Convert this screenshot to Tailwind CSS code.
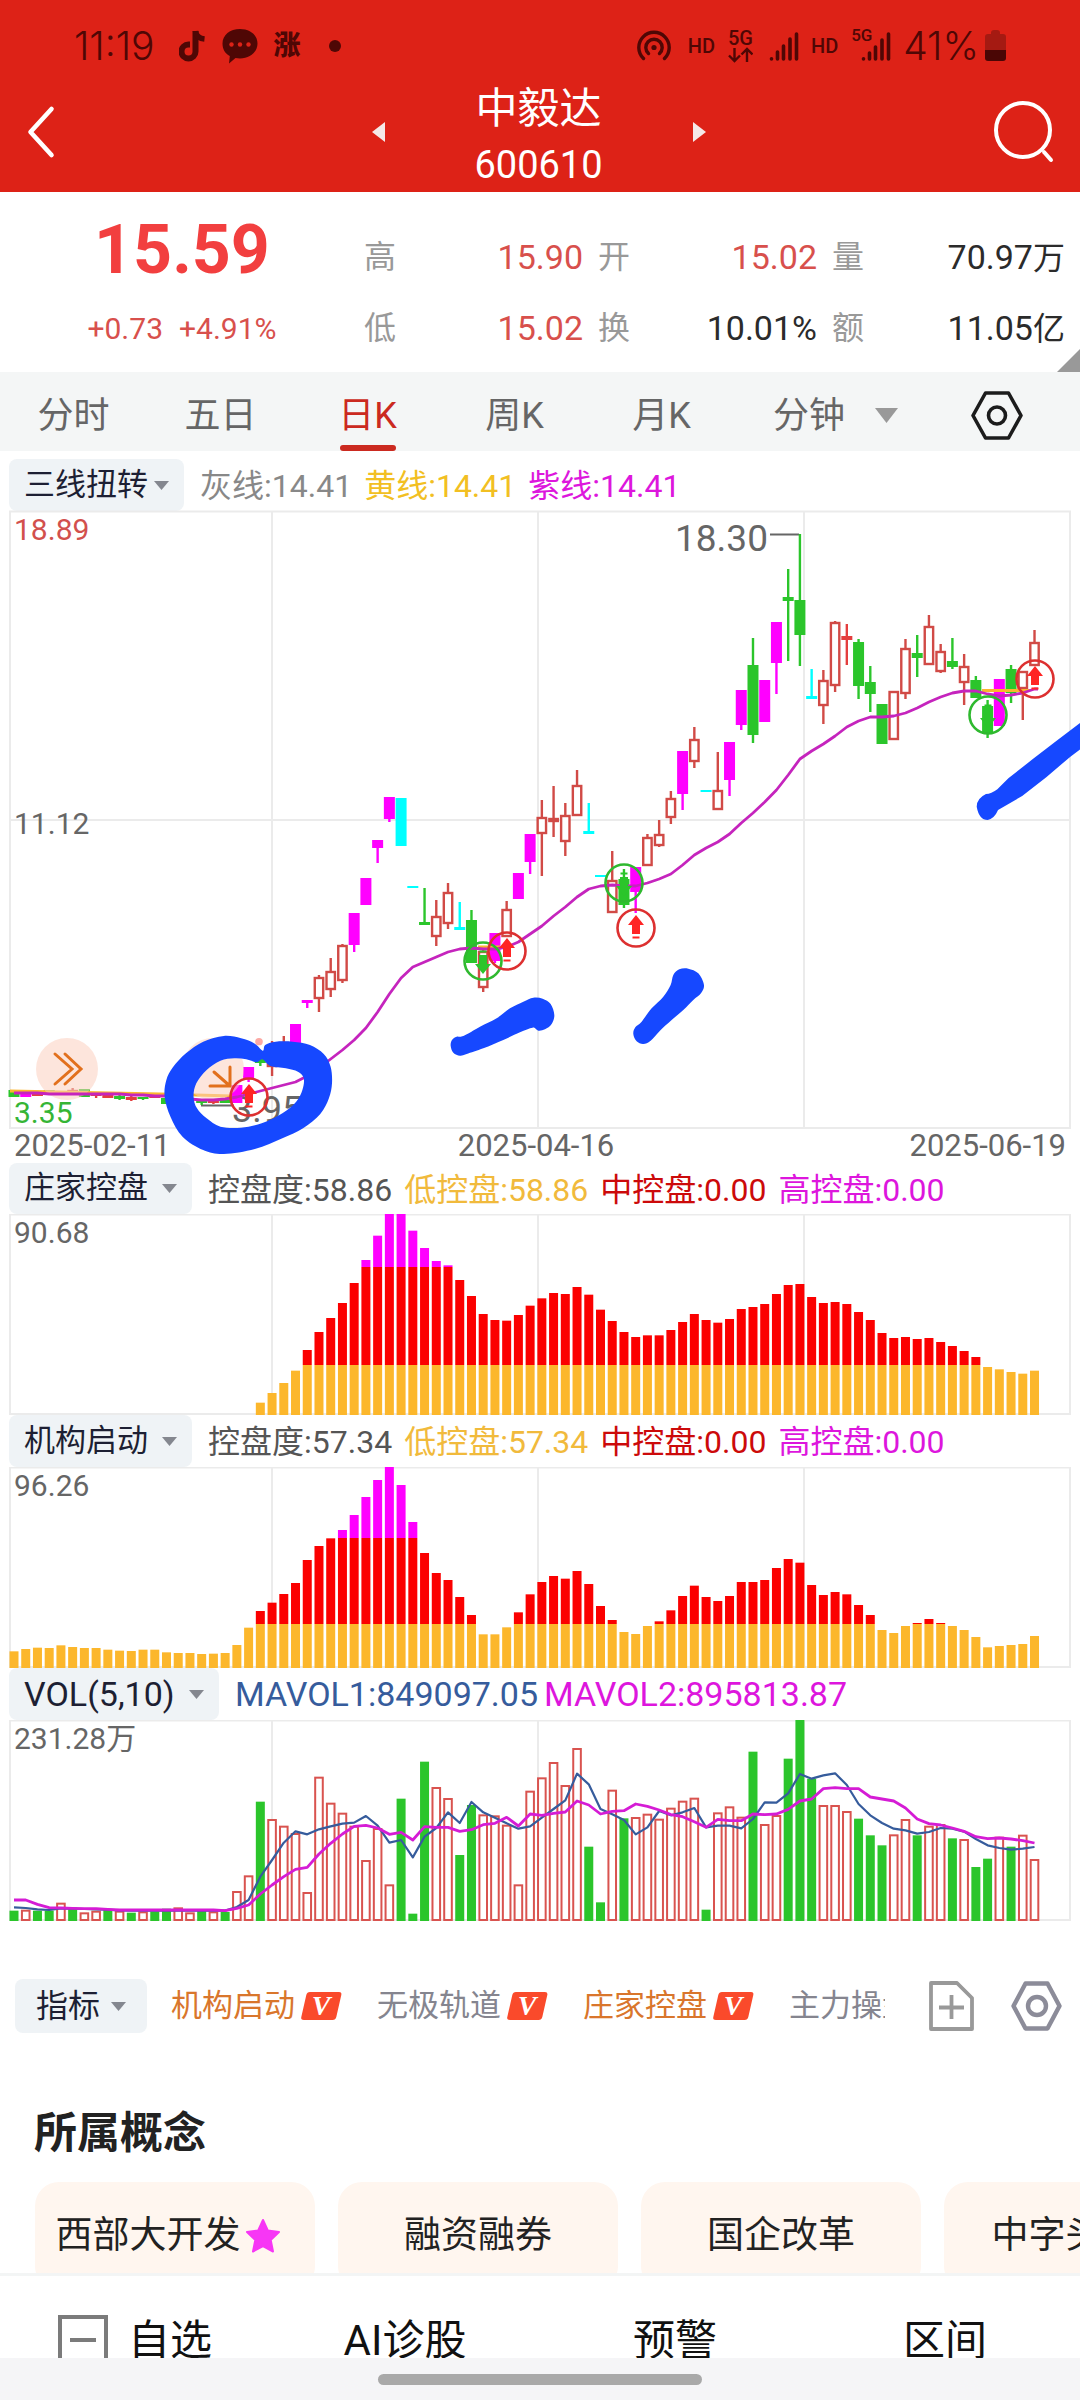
<!DOCTYPE html>
<html lang="zh-CN">
<head>
<meta charset="utf-8">
<meta name="viewport" content="width=device-width, initial-scale=1">
<title>中毅达 600610</title>
<script src="https://cdn.jsdelivr.net/npm/@tailwindcss/browser@4"></script>
</head>
<body class="bg-white font-['Roboto','Noto_Sans_CJK_SC',sans-serif] text-[#222] overflow-x-hidden">

<header class="bg-[#dd2217]">
  <div class="flex h-[72px] items-center justify-between pt-5 pl-[74px] pr-[74px] text-[#4f0705]">
    <div class="flex items-center">
      <span class="font-['Inter',sans-serif] text-[39px] font-light leading-10">11:19</span>
      <svg class="ml-6 h-[32px] w-[27px]" viewBox="0 0 27 32" fill="none" stroke="currentColor" stroke-width="6"><path d="M16.500 1v20.500a7 7 0 1 1-7-7h1.500"/><path d="M16.500 1c.5 5 4 7.500 9 8" stroke-width="5.500"/></svg>
      <svg class="ml-4 h-[36px] w-[36px]" viewBox="0 0 36 36"><path fill="currentColor" d="M18 1c10 0 17.500 6 17.500 14.500S28 30.500 18 30.500c-1.500 0-3 0-4.500-.4L7 35.500l.8-7.500C3 25.500.5 21 .5 15.500.5 7 8 1 18 1z"/><g fill="#dd2217"><circle cx="9.500" cy="16.500" r="2.200"/><circle cx="18" cy="16.500" r="2.200"/><circle cx="26.500" cy="16.500" r="2.200"/></g></svg>
      <span class="ml-4 text-[27px] font-black leading-8">涨</span>
      <span class="ml-7 size-3 rounded-full bg-current"></span>
    </div>
    <div class="flex items-center">
      <svg class="h-[32px] w-[34px]" viewBox="0 0 34 32" fill="none" stroke="currentColor" stroke-width="3.400" stroke-linecap="round"><path d="M6.500 28.500a15.200 15.200 0 1 1 21 0"/><path d="M11.500 23.500a8.200 8.200 0 1 1 11 0"/><circle cx="17" cy="17.500" r="2.600" fill="currentColor" stroke="none"/></svg>
      <span class="ml-[17px] text-[20px] font-medium leading-6">HD</span>
      <div class="ml-[13px] flex flex-col items-center">
        <span class="text-[20px] font-medium leading-[18px]">5G</span>
        <svg class="h-[16px] w-[25px]" viewBox="0 0 25 16" fill="none" stroke="currentColor" stroke-width="2.400"><path d="M6.500 1v12M1 8.500l5.500 5.500 5.500-5.500M19 15V3M13.500 7.500L19 2l5.500 5.500"/></svg>
      </div>
      <svg class="ml-4 h-[30px] w-[30px]" viewBox="0 0 30 30" stroke="currentColor" stroke-width="3.600" stroke-linecap="round"><path d="M2.500 27.800v.1M8.500 21v7M14.500 15v13M21 8v20M27.500 3v25"/></svg>
      <span class="ml-3 text-[20px] font-medium leading-6">HD</span>
      <div class="relative ml-[23px]">
        <svg class="h-[30px] w-[30px]" viewBox="0 0 30 30" stroke="currentColor" stroke-width="3.600" stroke-linecap="round"><path d="M2.500 27.800v.1M8.500 22v6M14.500 16v12M21 9v19M27.500 3v25"/></svg>
        <span class="absolute -top-1 -left-2.5 text-[17px] font-medium leading-4">5G</span>
      </div>
      <span class="ml-3 font-['Inter',sans-serif] text-[39px] font-light leading-10">41%</span>
      <svg class="ml-1.5 h-[32px] w-[21px]" viewBox="0 0 21 32"><path fill="#a51a12" d="M6 3q0-3 3-3h3q3 0 3 3v1h3q3 0 3 3v14H0V7q0-3 3-3h3z"/><path fill="#4a0605" d="M0 20h21v8q0 3-3 3H3q-3 0-3-3z"/></svg>
    </div>
  </div>
  <div class="flex h-[120px] items-center justify-between pl-[26px] pr-[26px] text-white">
    <button aria-label="返回" class="w-[57px]"><svg class="h-[54px] w-[30px]" viewBox="0 0 30 54" fill="none" stroke="currentColor" stroke-width="4.600" stroke-linecap="round" stroke-linejoin="round"><path d="M25.500 4L4.500 27l21 23"/></svg></button>
    <div class="flex items-center">
      <button aria-label="上一只"><svg class="h-5 w-[13px]" viewBox="0 0 13 20"><path fill="#f5e9e8" d="M13 0v20L0 10z"/></svg></button>
      <h1 class="w-[308px] pt-2.5 text-center">
        <span class="block text-[42px] leading-14">中毅达</span>
        <span class="block text-[38px] leading-14">600610</span>
      </h1>
      <button aria-label="下一只"><svg class="h-5 w-[13px]" viewBox="0 0 13 20"><path fill="#f5e9e8" d="M0 0v20l13-10z"/></svg></button>
    </div>
    <button aria-label="搜索"><svg class="h-[62px] w-[60px]" viewBox="0 0 60 62" fill="none" stroke="currentColor" stroke-width="4" stroke-linecap="round"><circle cx="29" cy="29" r="27"/><path d="M50 51l7 8"/></svg></button>
  </div>
</header>

<main>
<section class="relative grid h-[180px] grid-cols-[364fr_716fr]">
  <div class="pt-[18px] text-center">
    <p class="text-[68px] font-bold leading-[80px] text-[#f23f3f]">15.59</p>
    <p class="flex justify-center gap-4 text-[30px] leading-[78px] text-[#d8504c]"><span>+0.73</span><span>+4.91%</span></p>
  </div>
  <dl class="grid grid-cols-[234fr_234fr_248fr] content-start pt-[30px] text-[34px] leading-[70px] text-[#2b2b2b]">
    <div class="flex justify-between pr-[15px]"><dt class="text-[32px] text-[#999]">高</dt><dd class="text-[#d8504c]">15.90</dd></div>
    <div class="flex justify-between pr-[15px]"><dt class="text-[32px] text-[#999]">开</dt><dd class="text-[#d8504c]">15.02</dd></div>
    <div class="flex justify-between pr-[15px]"><dt class="text-[32px] text-[#999]">量</dt><dd>70.97<span class="text-[32px]">万</span></dd></div>
    <div class="flex justify-between pr-[15px]"><dt class="text-[32px] text-[#999]">低</dt><dd class="text-[#d8504c]">15.02</dd></div>
    <div class="flex justify-between pr-[15px]"><dt class="text-[32px] text-[#999]">换</dt><dd>10.01%</dd></div>
    <div class="flex justify-between pr-[15px]"><dt class="text-[32px] text-[#999]">额</dt><dd>11.05<span class="text-[32px]">亿</span></dd></div>
  </dl>
  <svg class="absolute right-0 bottom-0 size-[23px]" viewBox="0 0 23 23"><path fill="#999" d="M23 0v23H0z"/></svg>
</section>

<nav class="grid h-[79px] grid-cols-[147fr_147fr_147fr_147fr_147fr_163fr_182fr] bg-[#f4f6f6] pt-2 text-[36px] text-[#666]">
  <button>分时</button>
  <button>五日</button>
  <button class="relative text-[#cb2a20]">日K<span class="absolute bottom-0 left-1/2 h-1.5 w-14 -translate-x-1/2 rounded-full bg-[#cb2a20]"></span></button>
  <button>周K</button>
  <button>月K</button>
  <label class="flex items-center justify-between pl-[38px]">
    <select aria-label="分钟周期" class="appearance-none"><option>分钟</option></select>
    <svg class="h-[15px] w-[23px]" viewBox="0 0 23 15"><path fill="#999" d="M0 0h23L11.500 15z"/></svg>
  </label>
  <button aria-label="图表设置" class="flex items-center justify-end pr-[57px]"><svg class="h-[49px] w-[52px]" viewBox="0 0 52 49" fill="none" stroke="#1c1c1c" stroke-width="3.600" stroke-linejoin="round"><path d="M14.500 2h23L50 24.500 37.500 47h-23L2 24.500z"/><circle cx="26" cy="24.500" r="8.500"/></svg></button>
</nav>

<section>
  <div class="flex items-center gap-4 pt-2 pl-[9px] text-[32px]">
    <label class="flex h-[52px] items-center gap-1.5 rounded-lg bg-[#eff3f6] px-[15px] text-[31px] text-[#1d1f33]">
      <select aria-label="主图指标" class="appearance-none"><option>三线扭转</option></select>
      <svg class="h-[9px] w-[15px]" viewBox="0 0 15 9"><path fill="#84878f" d="M0 0h15L7.500 9z"/></svg>
    </label>
    <p class="flex gap-3 pt-0.5 whitespace-nowrap"><span class="text-[#888]">灰线:14.41</span><span class="text-[#f2bf22]">黄线:14.41</span><span class="text-[#dd16dd]">紫线:14.41</span></p>
  </div>
  <svg id="kline" class="relative block w-full overflow-visible" viewBox="0 511 1080 618" role="img" aria-label="日K线图"></svg>
  <div class="flex h-[34px] items-center justify-between px-[14px] text-[31px] text-[#666]"><span>2025-02-11</span><span class="pr-2">2025-04-16</span><span>2025-06-19</span></div>
</section>

<section>
  <div class="flex h-[51px] items-center gap-4 pl-[9px] text-[32px]">
    <label class="flex h-full items-center gap-3.5 rounded-lg bg-[#eff3f6] px-[15px] text-[31px] text-[#1d1f33]">
      <select aria-label="副图一指标" class="appearance-none"><option>庄家控盘</option></select>
      <svg class="h-[9px] w-[15px]" viewBox="0 0 15 9"><path fill="#84878f" d="M0 0h15L7.500 9z"/></svg>
    </label>
    <p class="flex gap-3 pt-0.5 whitespace-nowrap"><span class="text-[#555]">控盘度:58.86</span><span class="text-[#f1ba3c]">低控盘:58.86</span><span class="text-[#cc0a0a]">中控盘:0.00</span><span class="text-[#dd16dd]">高控盘:0.00</span></p>
  </div>
  <svg id="control" class="block w-full" viewBox="0 0 1080 201" role="img" aria-label="庄家控盘"></svg>
</section>

<section>
  <div class="flex h-[52px] items-center gap-4 pl-[9px] text-[32px]">
    <label class="flex h-full items-center gap-3.5 rounded-lg bg-[#eff3f6] px-[15px] text-[31px] text-[#1d1f33]">
      <select aria-label="副图二指标" class="appearance-none"><option>机构启动</option></select>
      <svg class="h-[9px] w-[15px]" viewBox="0 0 15 9"><path fill="#84878f" d="M0 0h15L7.500 9z"/></svg>
    </label>
    <p class="flex gap-3 pt-0.5 whitespace-nowrap"><span class="text-[#555]">控盘度:57.34</span><span class="text-[#f1ba3c]">低控盘:57.34</span><span class="text-[#cc0a0a]">中控盘:0.00</span><span class="text-[#dd16dd]">高控盘:0.00</span></p>
  </div>
  <svg id="launch" class="block w-full" viewBox="0 0 1080 201" role="img" aria-label="机构启动"></svg>
</section>

<section>
  <div class="flex h-[52px] items-center gap-4 pl-[9px] text-[34px]">
    <label class="flex h-full items-center gap-3.5 rounded-lg bg-[#eff3f6] px-[15px] text-[#1d1f33]">
      <select aria-label="副图三指标" class="appearance-none"><option>VOL(5,10)</option></select>
      <svg class="h-[9px] w-[15px]" viewBox="0 0 15 9"><path fill="#84878f" d="M0 0h15L7.500 9z"/></svg>
    </label>
    <p class="flex gap-1.5 whitespace-nowrap"><span class="text-[#365c9c]">MAVOL1:849097.05</span><span class="text-[#dd16dd]">MAVOL2:895813.87</span></p>
  </div>
  <svg id="volume" class="block w-full" viewBox="0 0 1080 201" role="img" aria-label="成交量"></svg>
</section>

<section class="mt-[58px] flex h-[54px] items-center pl-[15px] pr-[18px] text-[31px] text-[#85858f]">
  <label class="flex h-full shrink-0 items-center gap-2.5 rounded-lg bg-[#eff3f6] px-[21px] text-[32px] text-[#1d1f33]">
    <select aria-label="指标" class="appearance-none"><option>指标</option></select>
    <svg class="h-[9px] w-[15px]" viewBox="0 0 15 9"><path fill="#84878f" d="M0 0h15L7.500 9z"/></svg>
  </label>
  <div class="mr-11 ml-6 flex min-w-0 flex-1 gap-[35px] overflow-hidden whitespace-nowrap">
    <button class="flex shrink-0 items-center gap-1.5 text-[#d9762c]">机构启动<svg class="h-7 w-[41px] overflow-visible" viewBox="0 0 41 28"><path fill="#fa4a2b" d="M9 0h29q3 0 2.300 3l-5 22q-.7 3-3.700 3H3q-3.500 0-2.700-3l5-22Q6 0 9 0z"/><text x="20" y="23" fill="#fff" font-family="Liberation Serif, serif" font-size="28" font-weight="700" font-style="italic" text-anchor="middle">V</text></svg></button>
    <button class="flex shrink-0 items-center gap-1.5">无极轨道<svg class="h-7 w-[41px] overflow-visible" viewBox="0 0 41 28"><path fill="#fa4a2b" d="M9 0h29q3 0 2.300 3l-5 22q-.7 3-3.700 3H3q-3.500 0-2.700-3l5-22Q6 0 9 0z"/><text x="20" y="23" fill="#fff" font-family="Liberation Serif, serif" font-size="28" font-weight="700" font-style="italic" text-anchor="middle">V</text></svg></button>
    <button class="flex shrink-0 items-center gap-1.5 text-[#d9762c]">庄家控盘<svg class="h-7 w-[41px] overflow-visible" viewBox="0 0 41 28"><path fill="#fa4a2b" d="M9 0h29q3 0 2.300 3l-5 22q-.7 3-3.700 3H3q-3.500 0-2.700-3l5-22Q6 0 9 0z"/><text x="20" y="23" fill="#fff" font-family="Liberation Serif, serif" font-size="28" font-weight="700" font-style="italic" text-anchor="middle">V</text></svg></button>
    <button class="shrink-0">主力操盘</button>
  </div>
  <button aria-label="添加指标" class="mr-[37px] shrink-0"><svg class="h-[50px] w-[45px]" viewBox="0 0 45 50" fill="none" stroke="#999" stroke-width="3.800" stroke-linejoin="round"><path d="M2 2h26l15 15v31H2z"/><path d="M22.500 14v24M10 26.500h25"/></svg></button>
  <button aria-label="指标设置" class="shrink-0"><svg class="h-[50px] w-[51px]" viewBox="0 0 51 50" fill="none" stroke="#8c8c99" stroke-width="4.400" stroke-linejoin="round"><path d="M14.500 2.500h22L48.500 25l-12 22.500h-22L2.500 25z"/><circle cx="26" cy="25" r="9"/></svg></button>
</section>

<section class="pt-[70px]">
  <h2 class="px-[34px] text-[43px] font-bold leading-15">所属概念</h2>
  <div class="mt-[19px] flex h-[91px] gap-[23px] overflow-hidden pl-[35px] text-[37px] text-[#222]">
    <a href="#" class="flex h-[108px] w-[280px] shrink-0 items-center justify-center gap-1 rounded-[24px] bg-[#fff6ef] pr-3.5">西部大开发<svg class="size-9" viewBox="0 0 36 36"><path fill="#f736f5" stroke="#f736f5" stroke-width="2" stroke-linejoin="round" d="M18 2l4.800 10.500L34 14l-8.300 8L28 33.500 18 28 8 33.500 10.300 22 2 14l11.200-1.500z"/></svg></a>
    <a href="#" class="flex h-[108px] w-[280px] shrink-0 items-center justify-center rounded-[24px] bg-[#fff6ef]">融资融券</a>
    <a href="#" class="flex h-[108px] w-[280px] shrink-0 items-center justify-center rounded-[24px] bg-[#fff6ef]">国企改革</a>
    <a href="#" class="flex h-[108px] w-[280px] shrink-0 items-center justify-center rounded-[24px] bg-[#fff6ef]">中字头股票</a>
  </div>
</section>
</main>

<footer>
  <nav class="grid h-[85px] grid-cols-4 overflow-hidden border-t-[3px] border-[#f3f5f5] bg-white text-[42px] text-[#111]">
    <button class="flex h-[128px] items-center justify-center gap-5"><svg class="size-[50px]" viewBox="0 0 50 50" fill="none" stroke="#7b7b7b" stroke-width="4"><path d="M2 2h46v46H2zM12 25h26"/></svg>自选</button>
    <button class="h-[128px]">AI诊股</button>
    <button class="h-[128px]">预警</button>
    <button class="h-[128px]">区间</button>
  </nav>
  <div class="flex h-[42px] items-center justify-center bg-[#f5f5f7]"><span class="h-[11px] w-[324px] rounded-full bg-[#a9a9a9]"></span></div>
</footer>

<script>
const NS = 'http://www.w3.org/2000/svg';
const cx = i => 14 + 11.73 * i;
function add(parent, tag, attrs, text) {
  const e = document.createElementNS(NS, tag);
  for (const k in attrs) e.setAttribute(k, attrs[k]);
  if (text !== undefined) e.textContent = text;
  parent.appendChild(e);
  return e;
}
const rect = (p, x, y, w, h, fill) => add(p, 'rect', {x, y, width: w, height: h, fill});
const vline = (p, x, y1, y2, stroke) => add(p, 'path', {d: `M${x} ${y1}V${y2}`, stroke, 'stroke-width': 2.4});
function frame(p, top, bottom, mid) {
  const y = mid ? `M9 ${mid}H1070` : '';
  add(p, 'path', {d: `M9 ${top + .5}H1071M9 ${bottom}H1071${y}`, stroke: '#ebebeb', 'stroke-width': 2, fill: 'none'});
  add(p, 'path', {d: [10, 272, 538, 804, 1070].map(x => `M${x} ${top}V${bottom}`).join(''), stroke: '#ebebeb', 'stroke-width': 2});
}
const label = (p, x, y, t, fill, size = 30, anchor = 'start') => add(p, 'text', {x, y, fill, 'font-size': size, 'text-anchor': anchor}, t);
// Closed Catmull-Rom curve through the points
function blob(pts) {
  const n = pts.length, at = k => pts[(k + n) % n];
  let d = `M${pts[0]}`;
  for (let k = 0; k < n; k++) {
    const a = at(k - 1), b = at(k), c = at(k + 1), e = at(k + 2);
    d += `C${b[0] + (c[0] - a[0]) / 6} ${b[1] + (c[1] - a[1]) / 6} ${c[0] - (e[0] - b[0]) / 6} ${c[1] - (e[1] - b[1]) / 6} ${c}`;
  }
  return d + 'Z';
}

// ---- K line: [index, kind, high, body top, body bottom, low]
const COLOR = {g: '#2bc52b', r: '#d14a46', f: '#e43e3e', m: '#ff00ff', c: '#00ffff'};
const candles = [
 [0,'g',1090,1090,1097,1097],[1,'m',1094,1094,1097,1097],[2,'f',1094,1094,1096,1096],[3,'g',1090,1090,1092,1092],[4,'f',1092,1092,1094,1094],[5,'r',1088,1090,1092,1094],[6,'g',1089,1089,1097,1097],[7,'f',1092,1094,1096,1098],[8,'f',1095,1095,1098,1098],[9,'g',1095,1096,1099,1100],[10,'f',1096,1097,1100,1101],[11,'g',1097,1097,1099,1100],[12,'f',1095,1096,1098,1098],[13,'g',1097,1098,1104,1104],[14,'g',1098,1098,1103,1103],[16,'g',1100,1100,1103,1105],[17,'f',1100,1100,1103,1104],[18,'g',1100,1100,1103,1103],
 [19,'m',1085,1085,1103,1103],[20,'m',1067,1067,1079,1082],[21,'g',1050,1052,1063,1066],[22,'r',1041,1050,1066,1076],[23,'r',1036,1042,1060,1064],[24,'m',1024,1024,1050,1050],[25,'m',1000,1000,1003,1008],[26,'r',975,977,998,1012],[27,'r',958,971,989,997],[28,'r',944,945,980,983],[29,'m',913,913,945,952],[30,'m',878,878,905,905],[31,'m',840,840,848,863],[32,'m',797,797,819,822],[33,'c',798,798,846,846],[34,'c',886,886,888,888],[35,'g',888,922,925,925],[36,'r',900,916,936,946],[37,'r',883,892,923,929],[38,'c',902,927,930,930],[39,'g',910,920,963,963],[40,'r',949,951,987,992],[41,'m',933,933,961,963],[42,'r',901,909,936,936],[43,'m',873,873,899,899],[44,'m',834,834,862,874],[45,'r',800,817,833,876],[46,'r',786,818,821,837],[47,'r',803,815,841,856],[48,'r',770,785,815,815],[49,'c',803,831,834,834],[50,'c',875,875,877,877],[51,'r',851,880,912,912],[52,'g',869,879,905,908],[53,'m',867,867,892,913],[54,'r',834,837,865,865],[55,'r',820,834,845,847],[56,'r',791,798,817,824],[57,'m',751,751,794,810],[58,'r',727,739,761,768],[59,'c',790,790,792,792],[60,'r',752,790,809,809],[61,'m',742,742,780,796],[62,'m',690,690,725,730],[63,'g',638,665,735,743],[64,'m',680,680,722,722],[65,'m',622,622,663,694],[66,'g',569,597,601,661],[67,'g',534,600,635,666],[68,'c',669,696,699,699],[69,'r',670,680,705,724],[70,'r',621,622,685,692],[71,'f',624,636,640,665],[72,'g',639,642,686,699],[73,'g',666,682,694,712],[74,'g',704,704,744,744],[75,'r',691,691,739,739],[76,'r',639,648,693,699],[77,'g',635,653,658,677],[78,'r',615,626,664,665],[79,'r',644,651,671,673],[80,'g',638,661,667,669],[81,'r',654,666,682,705],[82,'g',676,680,698,698],[83,'g',700,706,734,738],[84,'m',679,679,726,726],[85,'g',665,669,693,703],[86,'r',671,671,688,720],[87,'r',630,642,665,665]];
const ma = [1093,1093,1093,1094,1094,1094,1094,1094,1094,1094,1095,1095,1096,1096,1098,1099,1100,1100,1099,1097,1094,1091,1088,1085,1082,1076,1068,1059,1050,1040,1028,1012,994,978,967,962,957,952,949,948,949,949,947,942,934,926,916,907,897,889,886,885,886,886,883,879,874,865,855,848,842,834,823,813,802,790,775,759,751,744,736,727,721,717,717,716,713,708,702,697,693,691,691,694,696,695,693,689];
const k = document.getElementById('kline');
frame(k, 511, 1128, 820);
label(k, 675, 551, '18.30', '#666', 37);
add(k, 'path', {d: 'M770 534.500H799M201 1105.500H234', stroke: '#666', 'stroke-width': 1.8});
label(k, 232, 1122, '3.95', '#666', 36);
label(k, 14, 540, '18.89', '#d2504d');
label(k, 14, 834, '11.12', '#666');
label(k, 14, 1123, '3.35', '#35b535');
for (const [i, t, hi, top, bot, lo] of candles) {
  const x = cx(i), col = COLOR[t];
  if (hi < top) vline(k, x, hi, top, col);
  if (lo > bot) vline(k, x, bot, lo, col);
  if (t === 'r') add(k, 'rect', {x: x - 4.2, y: top + 1, width: 8.4, height: Math.max(1, bot - top - 1), fill: '#fff', stroke: col, 'stroke-width': 2.4});
  else rect(k, x - 5.5, top, 11, bot - top, col);
}
add(k, 'path', {d: 'M10 1091L160 1094L232 1096M478 947H500M982 690.500H1030', stroke: '#fbb62e', 'stroke-width': 3, fill: 'none'});
for (const x of [67, 213]) add(k, 'circle', {cx: x, cy: 1069, r: 31, fill: '#fbcfc0', 'fill-opacity': .55});
add(k, 'path', {d: 'M55 1054l17 15-17 15M65 1054l16 15-16 15M214 1072l16 14M210 1086h20V1067', stroke: '#e2701d', 'stroke-width': 3, fill: 'none', 'stroke-linecap': 'round'});
add(k, 'polyline', {points: ma.map((y, i) => `${cx(i)},${y}`).join(' ') + ' 1038,689', stroke: '#c524bd', 'stroke-width': 2.8, fill: 'none', 'stroke-linejoin': 'round'});
// Buy (up) and sell (down) markers
for (const [x, y, up] of [[249,1097,1],[483,961,0],[507,951,1],[624,883,0],[636,928,1],[988,715,0],[1035,679,1]]) {
  const col = up ? '#dd3030' : '#2fb92f', s = up ? 1 : -1;
  add(k, 'circle', {cx: x, cy: y, r: 18.5, fill: 'none', stroke: col, 'stroke-width': 2.6});
  add(k, 'path', {transform: `translate(${x} ${y}) scale(1 ${s})`, fill: up ? '#ff2424' : '#2bc52b', d: 'M0-13L8-3H4V6H-4V-3H-8ZM-3.500 8.500H3.500V10.500H-3.500Z'});
}
// Hand-drawn marks
const ink = '#1648ff';
const g1 = add(k, 'g', {transform: 'translate(400 780) scale(.3333)', fill: ink});
add(g1, 'path', {d: blob([[152,797],[156,780],[170,770],[190,768],[240,740],[290,715],[330,685],[370,665],[400,653],[428,656],[452,672],[463,705],[455,732],[435,748],[415,752],[398,743],[360,757],[310,780],[250,805],[200,822],[180,827],[160,818]])});
add(g1, 'path', {d: blob([[700,762],[706,742],[725,725],[755,685],[790,650],[812,615],[820,585],[838,568],[865,566],[895,580],[912,615],[903,640],[880,660],[850,690],[815,720],[780,752],[752,782],[730,792],[710,784]])});
const g2 = add(k, 'g', {transform: 'translate(540 500) scale(.3444 .3333)', fill: ink});
add(g2, 'path', {d: 'M1569 668L1500 722L1430 778L1360 835L1328 868Q1310 882 1295 882Q1268 895 1268 920Q1275 960 1300 960Q1320 955 1330 930L1400 888L1470 832L1540 770L1569 748Z'});
const g3 = add(k, 'g', {transform: 'translate(0 780) scale(.3444 .3333)', fill: ink, 'fill-rule': 'evenodd'});
add(g3, 'circle', {cx: 752, cy: 785, r: 11, fill: '#fba9a4'});
add(g3, 'path', {d: blob([[478,950],[483,900],[502,862],[540,820],[590,785],[650,768],[700,775],[740,791],[763,812],[770,795],[800,785],[850,785],[900,795],[940,822],[960,860],[964,910],[955,955],[930,1002],[880,1045],[820,1075],[740,1107],[650,1122],[590,1110],[530,1070],[495,1010]])
  + blob([[562,950],[570,910],[600,870],[640,842],[680,835],[715,838],[745,847],[762,838],[785,858],[830,865],[865,875],[882,895],[878,930],[860,965],[820,1000],[760,1030],[700,1043],[640,1040],[600,1015],[572,985]])});

// ---- Control-degree histograms: bar tops in thirds of a pixel
function histogram(id, tops, start, offset, mid, high, text) {
  const p = document.getElementById(id);
  frame(p, 0, 200);
  label(p, 14, 29, text, '#666');
  tops.forEach((v, j) => {
    const x = cx(start + j) - 4.5, y = (v - offset) / 3;
    rect(p, x, Math.max(y, mid), 9, 201 - Math.max(y, mid), '#fcb72c');
    if (y < mid) rect(p, x, Math.max(y, high), 9, mid - Math.max(y, high), '#fb0000');
    if (y < high) rect(p, x, y, 9, high - y, '#ff00ff');
  });
}
histogram('control', [728,699,669,632,570,516,474,429,369,300,227,162,162,212,264,303,316,360,408,462,480,482,465,437,415,399,402,381,404,449,483,516,531,526,526,510,486,462,480,488,477,447,441,432,402,375,372,411,429,426,432,456,480,519,534,531,537,534,546,558,573,591,621,628,636,641,632], 21, 162, 151, 53, '90.68');
histogram('launch', [724,717,713,714,706,711,714,714,719,722,723,719,719,727,729,729,732,731,729,705,653,603,578,552,519,450,408,385,360,315,261,210,171,225,336,429,489,510,561,615,673,673,652,607,553,516,498,506,483,522,588,630,666,672,648,634,601,558,527,561,573,558,516,516,510,474,447,458,525,555,546,553,585,615,660,669,648,639,627,639,648,660,681,712,708,705,702,678], 0, 171, 157, 71, '96.26');

// ---- Volume
const vol = 'g722 r719 g722 g722 r698 g713 r727 r722 g720 r722 g728 r724 g724 g716 r712 r727 g722 r724 g726 r663 r616 g395 r447 r467 r489 r666 r320 r398 r428 r467 r570 r474 r643 g386 g731 g275 r351 r384 g555 g405 r433 r436 r464 r643 r362 r322 r276 r345 r234 g530 g697 r359 g445 r441 r431 r446 r413 r392 r383 g719 r427 r409 r440 g245 r462 r435 g266 g150 g326 r405 r405 r423 g446 g496 g526 r493 r447 g496 r467 r462 g505 r507 g591 g566 r500 g530 r494 r567'.split(' ');
const ma5 = [712,714,718,720,715,716,717,718,719,721,722,722,722,722,722,722,722,721,722,711,690,620,570,518,484,493,478,469,461,458,438,467,518,510,562,500,474,427,459,396,427,443,460,476,469,443,417,391,311,343,417,433,450,493,472,423,436,427,414,472,467,467,475,447,397,398,370,312,326,316,310,345,402,436,459,476,481,491,486,474,476,485,507,526,534,539,536,531];
const ma10 = [690,690,703,713,714,715,716,716,718,720,720,720,720,720,720,720,720,720,722,715,705,672,645,620,598,592,552,520,492,469,466,474,493,487,510,470,472,472,484,479,464,460,442,468,432,436,430,426,393,405,432,424,422,402,409,420,434,440,455,472,448,452,452,432,434,432,418,393,387,356,353,356,356,381,387,393,414,447,461,465,474,484,500,506,504,507,512,519];
const v = document.getElementById('volume');
frame(v, 0, 200);
label(v, 14, 29, '231.28万', '#666');
vol.forEach((s, i) => {
  const y = (+s.slice(1) - 150) / 3, x = cx(i);
  if (s[0] === 'g') rect(v, x - 4.5, y, 9, 201 - y, '#2bc52b');
  else add(v, 'rect', {x: x - 3.8, y: y + 1, width: 7.6, height: 199 - y, fill: '#fff', stroke: '#d9534f', 'stroke-width': 2});
});
for (const [d, c, w] of [[ma5, '#365c9c', 2.2], [ma10, '#d51cd5', 2.8]])
  add(v, 'polyline', {points: d.map((y, i) => `${cx(i)},${(y - 150) / 3}`).join(' '), stroke: c, 'stroke-width': w, fill: 'none', 'stroke-linejoin': 'round'});
</script>
</body>
</html>
